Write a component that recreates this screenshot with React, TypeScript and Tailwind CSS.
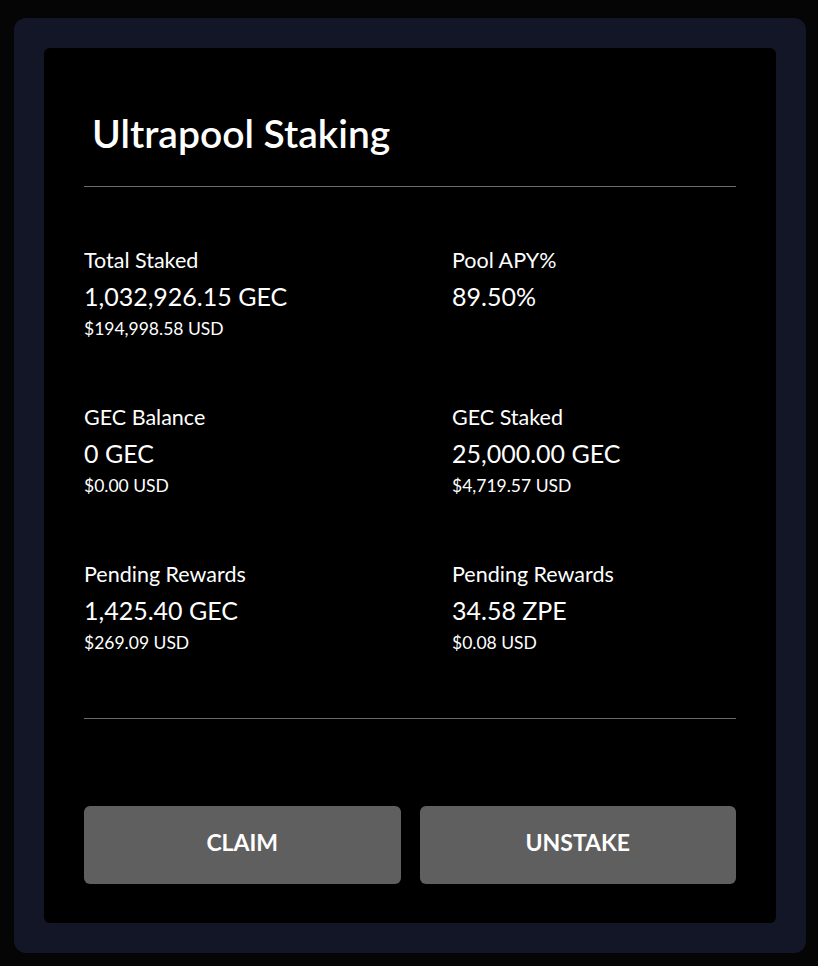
const stats = [
  { label: "Total Staked", value: "1,032,926.15 GEC", usd: "$194,998.58 USD" },
  { label: "Pool APY%", value: "89.50%", usd: "" },
  { label: "GEC Balance", value: "0 GEC", usd: "$0.00 USD" },
  { label: "GEC Staked", value: "25,000.00 GEC", usd: "$4,719.57 USD" },
  { label: "Pending Rewards", value: "1,425.40 GEC", usd: "$269.09 USD" },
  { label: "Pending Rewards", value: "34.58 ZPE", usd: "$0.08 USD" },
];

export default function App() {
  return (
    <div
      className="min-h-screen w-full bg-[#050505] pt-[18px] pl-[14px] text-white"
      style={{ fontFamily: "Lato, 'Noto Sans', sans-serif" }}
    >
      <div className="w-[792px] h-[935px] rounded-[12px] bg-[#131626] p-[30px]">
        <div className="h-[875px] rounded-[6px] bg-black px-[40px]">
          <h1 className="pt-[63px] pl-2 text-[39px] leading-[44px] font-semibold">
            Ultrapool Staking
          </h1>
          <div className="mt-[31px] h-px bg-[#6b6b6b]" />

          <div className="grid grid-cols-[368px_1fr] gap-y-[66px] pt-[61px]">
            {stats.map((s, i) => (
              <div key={i} className="flex flex-col">
                <span className="text-[21.5px] leading-[24px]">{s.label}</span>
                <span className="mt-[9px] text-[25px] leading-[30px]">{s.value}</span>
                <span className="mt-[8px] text-[17.5px] leading-[20px]">{s.usd}</span>
              </div>
            ))}
          </div>

          <div className="mt-[65px] h-px bg-[#6b6b6b]" />

          <div className="mt-[87px] flex gap-[19px]">
            <button className="h-[78px] flex-1 rounded-[6px] bg-[#5f5f5f] pb-[5px] text-[23px] font-bold">
              CLAIM
            </button>
            <button className="h-[78px] flex-1 rounded-[6px] bg-[#5f5f5f] pb-[5px] text-[23px] font-bold">
              UNSTAKE
            </button>
          </div>
        </div>
      </div>
    </div>
  );
}
